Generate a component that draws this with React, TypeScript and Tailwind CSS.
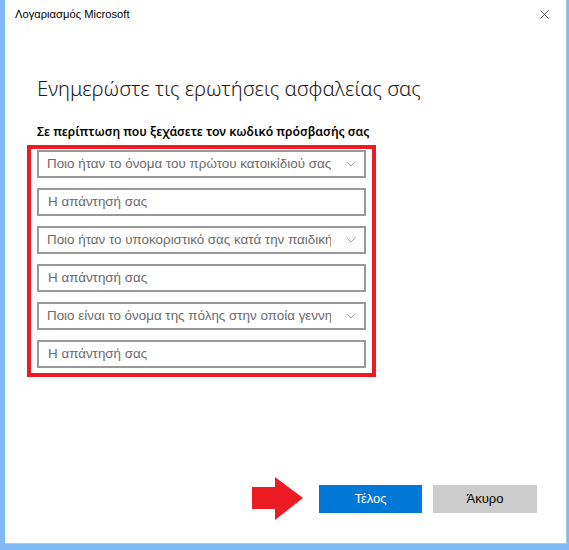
import { ChevronDown, X } from 'lucide-react';

const questions = [
  'Ποιο ήταν το όνομα του πρώτου κατοικίδιού σας',
  'Ποιο ήταν το υποκοριστικό σας κατά την παιδική ηλικία σας',
  'Ποιο είναι το όνομα της πόλης στην οποία γεννηθήκατε',
];

const fieldFont = { fontFamily: '"Liberation Sans", Arial, sans-serif' };

function QuestionSelect({ text }: { text: string }) {
  return (
    <div className="flex h-[28px] items-center border-2 border-[#999999] bg-white pl-[8px] pr-[5px]">
      <div className="flex-1 overflow-hidden whitespace-nowrap text-[13.4px] text-[#6b6b6b]" style={fieldFont}>
        {text}
      </div>
      <ChevronDown className="ml-[12px] h-[16px] w-[16px] text-[#8a8a8a]" strokeWidth={1.2} />
    </div>
  );
}

function AnswerInput() {
  return (
    <div className="flex h-[28px] items-center border-2 border-[#999999] bg-white pl-[9px]">
      <span className="text-[13.4px] text-[#6b6b6b]" style={fieldFont}>
        Η απάντησή σας
      </span>
    </div>
  );
}

export default function App() {
  return (
    <div
      className="flex h-[550px] w-[569px] bg-[#80b9f4] pb-[6px] pl-[5px] pr-[2px]"
      style={{ fontFamily: '"Noto Sans", "Open Sans", sans-serif' }}
    >
      <div className="flex flex-1 flex-col border-b border-r border-[#a9c6e6] bg-white">
        <div className="flex h-[28px] items-center justify-between pl-[10px] pr-[14px]">
          <span className="text-[11.2px] text-black" style={fieldFont}>
            Λογαριασμός Microsoft
          </span>
          <X className="h-[15px] w-[15px] text-[#222]" strokeWidth={1.2} />
        </div>

        <div className="flex flex-1 flex-col pl-[32px]">
          <h1 className="mt-[45px] text-[20.4px] font-light leading-[30px] text-[#1a1a1a]">
            Ενημερώστε τις ερωτήσεις ασφαλείας σας
          </h1>
          <p className="mt-[20px] text-[12.2px] font-semibold leading-[18px] text-black">
            Σε περίπτωση που ξεχάσετε τον κωδικό πρόσβασής σας
          </p>

          <div className="ml-[-10px] mt-[4px] w-[349px] border-[4px] border-[#ed1c24] px-[6px] pt-[1px] pb-[5px]">
            <div className="flex flex-col gap-[10px]">
              {questions.map((q) => (
                <div key={q} className="flex flex-col gap-[10px]">
                  <QuestionSelect text={q} />
                  <AnswerInput />
                </div>
              ))}
            </div>
          </div>

          <div className="mt-auto mb-[23px] flex items-center justify-end pr-[29px]">
            <svg width="51" height="43" viewBox="0 0 51 43" className="mr-[16px]">
              <polygon points="0,10 23,10 23,0 51,21 23,43 23,32 0,32" fill="#ed1c24" />
            </svg>
            <button className="h-[28px] w-[103px] bg-[#0078d7] text-[13px] text-white" style={fieldFont}>
              Τέλος
            </button>
            <button className="ml-[11px] h-[28px] w-[104px] bg-[#cccccc] text-[13px] text-black" style={fieldFont}>
              Άκυρο
            </button>
          </div>
        </div>
      </div>
    </div>
  );
}
